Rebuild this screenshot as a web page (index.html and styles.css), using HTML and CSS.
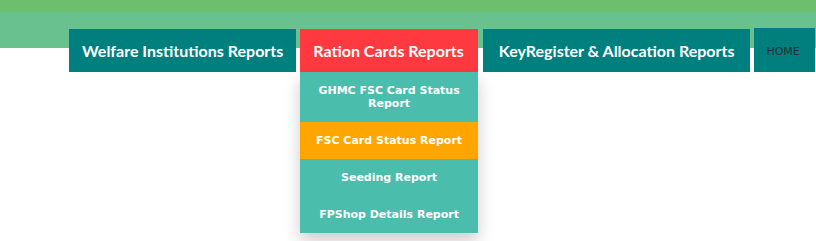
FILE: index.html
```html
<!DOCTYPE html>
<html lang="en">
<head>
    <meta charset="UTF-8">
    <title>Reports</title>
    <link rel="stylesheet" href="styles.css">
</head>
<body>
    <header class="site-header">
        <nav class="main-nav">
            <div class="nav-item">Welfare Institutions Reports</div>
            <div class="nav-item active">
                Ration Cards Reports
                <ul class="dropdown">
                    <li>GHMC FSC Card Status Report</li>
                    <li class="hover">FSC Card Status Report</li>
                    <li>Seeding Report</li>
                    <li>FPShop Details Report</li>
                </ul>
            </div>
            <div class="nav-item wide">KeyRegister &amp; Allocation Reports</div>
            <div class="nav-item home">HOME</div>
        </nav>
    </header>
</body>
</html>
```

FILE: styles.css
```css
body {
    margin: 0;
    padding: 0;
    background: #fff;
    font-family: "Lato", "Open Sans", sans-serif;
}

.site-header {
    height: 241px;
    background: linear-gradient(to bottom, #6cbf6c 0, #6cbf6c 12px, #6ac190 12px, #6ac190 48px, #fff 48px);
}

.main-nav {
    display: flex;
    align-items: flex-start;
    gap: 4px;
    padding: 29px 0 0 69px;
}

.nav-item {
    position: relative;
    height: 43px;
    display: flex;
    align-items: center;
    padding: 0 13px;
    background-color: #007f7f;
    color: #fff;
    font-weight: bold;
    font-size: 16px;
    white-space: nowrap;
}

.nav-item.active {
    background-color: #fe3a40;
    padding: 0 14px 0 13px;
}

.nav-item.wide {
    margin-left: 1px;
    padding: 0 16px;
}

.nav-item.home {
    height: 41px;
    margin-top: -1px;
    padding: 3px 15px 0 12px;
    font-family: "DejaVu Sans", Verdana, sans-serif;
    font-weight: normal;
    font-size: 11px;
    color: #1f3535;
}

.dropdown {
    position: absolute;
    top: 43px;
    left: 0;
    right: 0;
    margin: 0;
    padding: 0;
    list-style: none;
    background-color: #4abdac;
    box-shadow: 0 8px 16px rgba(0, 0, 0, 0.2);
}

.dropdown li {
    padding: 12px 14px;
    line-height: 13px;
    text-align: center;
    white-space: normal;
    font-family: "DejaVu Sans", Verdana, sans-serif;
    font-size: 11px;
    font-weight: bold;
    color: #fff;
}

.dropdown li.hover {
    background-color: #ffa500;
}
```
